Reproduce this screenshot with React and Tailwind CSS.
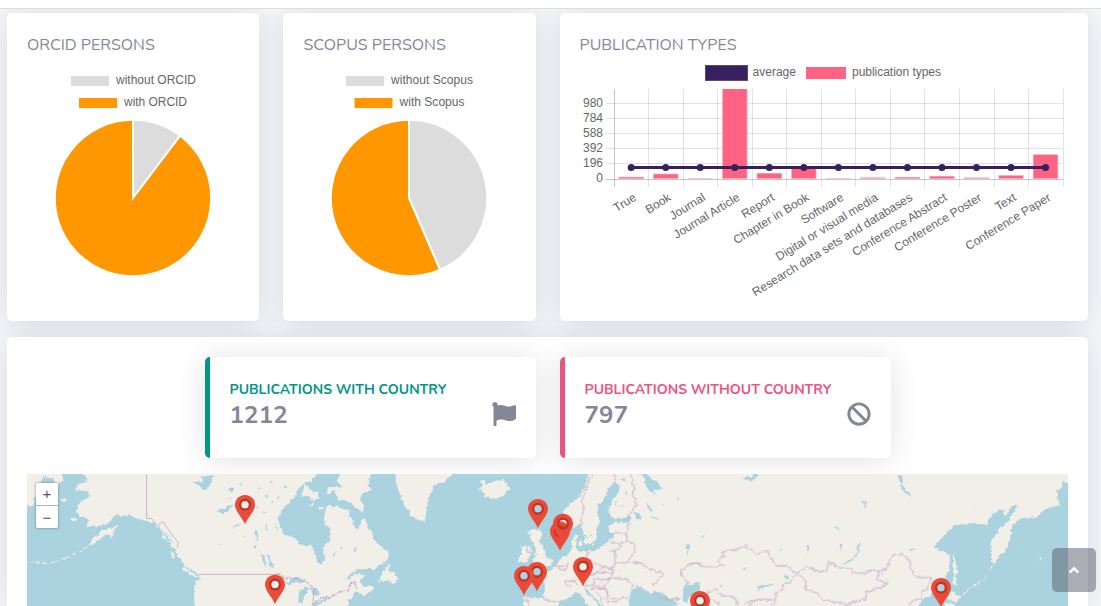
import React from "react";
import { FaFlag, FaBan, FaAngleUp } from "react-icons/fa";

const shadow = "shadow-[0_2px_28px_0_rgba(58,59,69,0.15)]";
const chartFont = "font-['Liberation_Sans',Arial,sans-serif] text-[12px]";

function Title({ children, className }) {
  return (
    <h2 className={`h-[22px] whitespace-nowrap pt-px font-['Nunito','Lato',sans-serif] text-[16px] leading-[22px] font-normal text-[#858796] ${className}`}>
      {children}
    </h2>
  );
}

function PieCard({ title, titleClass, name, share, width, legend }) {
  const angle = share * Math.PI * 2;
  const r = 78.2;
  const x = r * Math.sin(angle);
  const y = -r * Math.cos(angle);
  return (
    <section className={`h-[308px] rounded-[5px] bg-white px-5 pt-5 ${shadow}`}>
      <Title className={titleClass}>{title}</Title>
      <svg className={`mt-[11px] block ${chartFont}`} width={width - 40} height="220" viewBox={`0 66 ${width - 40} 220`}>
        <rect x={legend[0] - 20} y="76" width="38" height="10" fill="#dcdcdc" />
        <rect x={legend[1] - 20} y="98" width="38" height="10" fill="#ff9800" />
        <text x={legend[0] + 25} y="84" fill="#666" textLength={legend[2]}>without {name}</text>
        <text x={legend[1] + 25} y="106" fill="#666" textLength={legend[3]}>with {name}</text>
        <g transform="translate(106 198)" stroke="#fff" strokeWidth="2">
          <path d={`M0 0V${-r}A${r} ${r} 0 0 1 ${x} ${y}Z`} fill="#dcdcdc" />
          <path d={`M0 0L${x} ${y}A${r} ${r} 0 ${share < 0.5 ? 1 : 0} 1 0 ${-r}Z`} fill="#ff9800" />
        </g>
      </svg>
    </section>
  );
}

const types = [
  ["True", 176.8], ["Book", 173.7], ["Journal", 178.3], ["Journal Article", 89],
  ["Report", 173], ["Chapter in Book", 168], ["Software", 178.3],
  ["Digital or visual media", 177.2], ["Research data sets and databases", 177],
  ["Conference Abstract", 176], ["Conference Poster", 177.3], ["Text", 175.2],
  ["Conference Paper", 154.3],
];
const centre = (i) => 631.2 + i * 34.53;

function BarChart() {
  return (
    <svg className={`mt-[5px] block ${chartFont}`} width="488" height="246" viewBox="580 60 488 246">
      <rect x="705.5" y="65.5" width="42" height="15" fill="#36215e" stroke="#5b4a7b" />
      <text x="752.5" y="76" fill="#666" textLength="43.5">average</text>
      <rect x="806" y="67" width="40" height="12" fill="#ff6384" />
      <text x="852" y="76" fill="#666" textLength="89">publication types</text>
      <g stroke="#000" strokeOpacity=".11">
        {[103.5, 118.5, 133.5, 148.5, 163.5].map((y) => <path key={y} d={`M606 ${y}H1063`} />)}
        {types.map((t, i) => <path key={i} d={`M${Math.floor(648.5 + i * 34.55) + 0.5} 89V187`} />)}
        <path d="M606 179.5H1063M614.5 89V187" strokeOpacity=".22" />
      </g>
      {[980, 784, 588, 392, 196, 0].map((v, i) => (
        <text key={v} x="603" y={107 + i * 15.05} fill="#666" textAnchor="end">{v}</text>
      ))}
      {types.map(([name, top], i) => (
        <g key={name}>
          <rect x={centre(i) - 12.7} y={top} width="25.4" height={179 - top} fill="#ffb1c2" />
          {179 - top > 1.9 && <rect x={centre(i) - 11.9} y={name === "Journal Article" ? top : top + 0.6} width="23.8" height={178.2 - top - (name === "Journal Article" ? 0 : 0.6)} fill="#ff6384" />}
          <text transform={`translate(${centre(i) + 6} 199.6) rotate(-31.5)`} fill="#666" textAnchor="end">{name}</text>
        </g>
      ))}
      <path d={`M${centre(0)} 167.4H${centre(12)}`} stroke="#36215e" strokeWidth="3" />
      {types.map((t, i) => <circle key={i} cx={centre(i)} cy="167.4" r="3.5" fill="#36215e" />)}
    </svg>
  );
}

function CountCard({ label, value, accent, labelClass, icon }) {
  return (
    <article className={`flex h-[101px] w-[331px] items-center justify-between rounded-[5px] border-l-[5px] bg-white pr-5 pl-5 font-['Nunito','Lato',sans-serif] font-bold ${shadow} ${accent}`}>
      <div className="-mt-[5px]">
        <div className={`whitespace-nowrap text-[14px] leading-[20px] ${labelClass}`}>{label}</div>
        <div className="text-[24px] leading-[30px] tracking-[0.2px] text-[#858796]">{value}</div>
      </div>
      <div className="mt-[13px] text-[24px] text-[#858796]">{icon}</div>
    </article>
  );
}

function Pin({ x, y }) {
  return (
    <g transform={`translate(${x} ${y})`}>
      <path fillRule="evenodd" fill="#ea4b39" d="M0 19.5C-2 14-10 6-10 .2C-10-5.5-5.5-9.8 0-9.8S10-5.5 10 .2C10 6 2 14 0 19.5ZM0-4A4 4 0 1 0 0 4A4 4 0 1 0 0-4Z" />
      <circle r="4.9" fill="none" stroke="#bd3527" strokeWidth="2.3" />
    </g>
  );
}

const pins = [[245, 504.7], [275, 584.6], [538, 508.8], [560, 531.3], [563, 523.6], [537, 571.7], [524, 575.7], [583, 566.8], [700, 600.7], [941, 587.8]];

function WorldMap() {
  return (
    <svg className="block h-[132px] w-[1041px] bg-[#aad3df]" viewBox="27 474 1041 132">
      <defs>
        <filter id="coast" x="0" y="0" width="100%" height="100%" colorInterpolationFilters="sRGB">
          <feTurbulence type="fractalNoise" baseFrequency="0.22" numOctaves="2" seed="4" />
          <feDisplacementMap in="SourceGraphic" scale="5" xChannelSelector="R" yChannelSelector="G" />
        </filter>
      </defs>
      <g filter="url(#coast)">
        <g transform="translate(20 466) scale(.33333)" fill="#f2efe9">
          <path d="M0 0H110L130 42L112 55L95 40L75 30L60 50L45 95L40 122L0 118Z" />
          <path d="M180 0L205 45L182 50L158 72L205 75L212 92L182 105L168 138L183 152L205 160L203 182L235 180L262 175L275 160L290 145L320 150L330 146L345 157L378 164L405 174L418 184L430 215L450 235L465 248L472 270L490 295L530 320L540 340L525 350L522 380L525 440H980L985 405L1005 380L1020 378L1030 390L1070 364L1030 360L1020 345L1035 330L1015 320L970 345L985 330L1015 310H1065L1075 300L1105 285L1108 262L1090 245L1065 225L1055 200L1042 180L1035 158L1028 160L1015 190L1005 185L995 155L985 135L950 120H920L912 155L918 175L930 195L928 225L908 245L912 265L905 293L890 285L885 262L875 238H840L830 215L795 208L778 180L776 160L785 135L810 105L830 85L840 62L855 50L875 45L890 24V0Z" />
          <path d="M970 10H1060L1042 60L1055 75L1030 75L1020 95L1035 130L1025 135L995 115L965 100L955 105L945 75L918 80L930 62L970 65L950 45Z" />
          <path d="M855 52L872 75L895 80L895 98L875 102L860 88L842 92L852 68ZM868 114L882 110L878 120L868 122ZM897 122L908 122L908 130L899 130Z" />
          <path d="M1105 290L1110 300L1102 315L1125 320L1133 350L1120 352L1110 345L1078 345L1085 325Z" />
          <path d="M1125 10H1305L1280 45L1240 60L1222 110L1215 165L1195 160L1175 150L1150 110L1130 65Z" />
          <path d="M1380 45L1392 42L1398 57L1425 45L1450 42L1468 65L1450 90L1420 100L1392 92L1396 80L1378 70L1388 62Z" />
          <path d="M155 155L172 158L170 166L157 164ZM262 195L280 194L284 207L270 212ZM115 96L142 102L135 108ZM450 255L462 260L467 282L455 275ZM487 300L500 308L536 334L525 334L498 318Z" />
          <path d="M35 288L60 289M70 292L90 290L115 287M125 280L152 270M158 264L185 254M190 248L210 241" stroke="#f2efe9" strokeWidth="3" />
          <path d="M205 232L225 212L252 190L275 187L300 173L280 194L250 211L235 223L213 238Z" />
        </g>
        <g transform="translate(500 466) scale(.33333)" fill="#f2efe9">
          <path d="M278 0L255 60L240 90L205 120L190 140L185 160L200 185L218 185L240 175L250 200L255 235L270 235L290 220L292 190L300 165L292 145L295 115L320 90L325 65L345 50L360 60L355 80L335 105L325 130L330 153L365 158L395 150L390 167L345 170L325 180L330 200L345 210L325 222L300 250L265 255L240 255L228 248L226 230L235 208L222 205L215 218V245L205 265L185 275L165 300L150 312L130 318L132 345L135 370L130 395H70L68 440H170L180 405L200 398L225 382L240 382L250 400L278 440H305L290 410L260 380L250 365L265 372L305 420L315 440H380L390 385L410 360L430 368L450 382L465 374L490 385L530 408V440H640V0H523L495 42L470 45L490 70L460 70L464 88L450 80L435 45L418 20V0Z" />
          <path d="M425 10H530L500 45L462 44Z" />
          <path d="M95 190L120 190L127 205L117 225L130 250L140 275L158 282L153 300L120 303L92 305L105 290L96 280L110 260L105 240L95 225L88 205ZM65 240L95 238L92 280L58 292L56 275L66 260ZM82 196L90 192L86 208ZM232 225L245 222L248 240L235 240ZM274 237L287 226L280 242Z" />
        </g>
        <path d="M695 460H905V620H695Z" fill="#f2efe9" />
        <g transform="translate(890 466) scale(.33333)" fill="#f2efe9">
          <path d="M-10 0H550V58L520 45L515 60L500 80L508 118L485 122L465 130L428 162L425 152L390 158L370 175L360 190L368 200L350 245L330 270L312 298L303 275L302 230L320 200L355 165L382 120L368 120L345 150L338 145L345 130L318 135L295 160L290 180L250 172L190 178L155 215L130 245L165 258L180 270L178 300L172 330L150 345L120 390L95 400L80 440H-10Z" />
          <path d="M190 255L198 290L206 325L196 330L200 356L190 352L188 310ZM180 375L212 392L197 408L175 400ZM165 410L195 415L180 440H160ZM388 238L397 242L390 244ZM445 273L455 278L449 281Z" />
          <path d="M308 300L300 315M292 327L278 342M270 350L248 364M240 368L220 385" stroke="#f2efe9" strokeWidth="3" />
        </g>
      </g>
      <g filter="url(#coast)" fill="#aad3df">
        <g transform="translate(20 466) scale(.33333)">
          <path d="M545 32L580 28L578 45L560 72L545 64L520 48L550 46ZM592 133L612 128L645 112L625 135L610 145ZM615 72L640 67L638 76ZM635 188L650 174L665 176L645 182ZM655 52L670 54L664 60ZM690 106L705 95L700 112ZM730 90L745 86L742 97ZM680 135L694 130L690 140ZM704 190L717 200L710 225ZM738 170L744 190L735 186ZM765 170L775 198L766 186ZM738 258L752 278L764 310L752 302ZM724 262L735 280L742 305L728 285ZM770 318L782 325L775 334ZM795 348L818 342L805 356ZM595 235L606 234L602 240ZM625 97L633 96L630 101ZM770 100L784 88L778 102ZM706 124L712 118L716 128ZM728 140L736 136L738 146ZM752 108L760 104L762 112ZM788 62L796 56L798 66ZM748 48L756 44L758 52ZM712 64L722 60L724 68ZM672 210L680 214L674 220ZM700 242L708 238L708 248Z" />
          <path d="M795 355L825 332L862 340L842 352L815 350ZM835 400L838 375L855 362L865 368L852 395L848 415L836 412ZM865 362L890 370L902 385L880 392ZM872 418L930 391L930 398L884 421ZM995 140L1008 155L1005 170L990 150ZM905 272L920 260L910 290ZM962 248L970 240L967 254ZM935 262L944 258L940 270ZM1000 250L1012 246L1007 257ZM895 186L903 185L900 192ZM1035 344L1060 342L1055 352ZM1000 322L1030 311L1080 308L1063 324L1030 322Z" />
          <path d="M420 190L445 215L455 240L438 218ZM440 195L452 215L463 236L452 224Z" />
        </g>
        <g transform="translate(500 466) scale(.33333)">
          <path d="M400 138L418 142L425 160L408 160ZM437 108L455 130L452 140L440 122ZM375 70L382 80L378 90ZM365 35L375 40L370 48ZM253 203L262 210L258 218ZM269 196L277 210L273 214ZM450 148L475 158L470 163ZM553 358L600 350V390L575 385L560 410L548 395ZM384 160L392 162L390 174ZM485 118L492 114L490 122ZM558 236L570 234L562 265ZM590 230L602 230L595 234ZM345 105L350 112L346 119ZM362 120L371 122L366 127ZM532 100L540 97L538 105Z" />
        </g>
        <g transform="translate(690 466) scale(.33333)">
          <path d="M155 35L185 33L194 20L205 26L190 42L170 44ZM460 290L480 284L500 260L507 230L512 233L508 256L485 287L465 294ZM-20 358L25 352L26 368L0 382L-20 375ZM203 360L250 355L245 360L212 364L205 375ZM510 99L532 111L525 126L520 112ZM422 190L440 180L453 190L430 185ZM445 222L456 240L457 265L450 240ZM350 240L362 237L353 258ZM360 303L370 303L368 312ZM430 291L437 293L432 304ZM35 210L46 205L42 214ZM158 306L167 304L164 311ZM268 250L284 247L270 258ZM573 325L580 320L576 330ZM225 405L240 403L235 409ZM282 325L298 340L285 340ZM84 359L98 355L96 361Z" />
          <path d="M625 24L634 30L637 60L650 75L671 99L650 82L633 67ZM662 250L674 247L667 256ZM847 130L855 126L850 133ZM615 155L640 150L620 154Z" />
        </g>
      </g>
      <g fill="none" stroke="#cbb2c8" strokeWidth="3" strokeLinejoin="round">
        <g transform="translate(20 466) scale(.33333)">
          <path d="M380 0V157L395 158L412 180L428 166L445 190L460 212L475 230L472 245M537 325H770" />
        </g>
      </g>
      <g filter="url(#coast)" fill="none" stroke="#c6abc3" strokeWidth="3" strokeLinejoin="round">
        <path d="M770 325L785 332L805 337L840 338L860 350L884 370L878 415L905 395L935 390L960 376L985 375L992 350L1004 346L1010 372" transform="translate(20 466) scale(.33333)" />
        <g transform="translate(500 466) scale(.33333)">
          <path d="M280 24L262 55L247 95L250 125L243 180M345 22V50M390 22L402 60L398 85L412 112L387 150L382 180L380 225L362 232M325 203L355 200L382 208M327 225L355 232L362 240L345 255H328M380 225L402 232L404 255L392 272L382 290L345 290M263 250V280L282 292L310 302L338 310L345 288V254M395 290L430 292L442 308L485 320L482 336L462 353L460 360M310 302L285 323L265 328M338 308L338 330L320 340L350 335L380 340L400 360L390 380M230 328L262 326M230 340L195 345L200 360L215 362M195 302L165 295M165 300L198 315L205 290M252 360L285 355L278 335M275 370L315 365L322 375L318 405M72 402H85L86 418M130 400L180 410M82 240L78 255L94 258M460 380L490 398L540 400M600 290L578 292L545 310V330L565 350L555 358" />
          <path d="M280 325L310 318L338 322M285 340L330 340L312 363L280 360M315 370L332 398L385 395M320 410L355 405M285 375L307 400V418M205 346L225 347L230 357" />
        </g>
        <g transform="translate(690 466) scale(.33333)">
          <path d="M0 292L18 290L48 303L98 300L85 286L100 270L95 258L130 252L170 238L182 252L200 265L230 252L258 300L288 298L320 322L347 345V372L380 380L398 402L470 415L525 400L528 378L555 370L595 353L560 340L568 315L550 312L520 322L500 322L478 308L445 305L418 288L408 316L370 312L350 303L320 322L298 350L280 352L275 373L260 380L255 405L245 418M565 315L590 310L600 280L610 266H635L652 275L660 290L664 315L685 335L725 335L710 372L695 375L692 395L670 405L655 418M50 378L75 370L100 390L135 393L143 420M163 415L205 400L250 401M60 400L85 408L82 420M175 420L205 400" />
        </g>
      </g>
      {pins.map(([x, y]) => <Pin key={`${x}-${y}`} x={x} y={y} />)}
    </svg>
  );
}

export default function App() {
  return (
    <div className="relative flex h-[606px] w-[1101px] flex-col overflow-hidden bg-[#f6f7fb]">
      <div className="h-[9px] shrink-0 border-b border-[#dedee2] bg-white" />
      <main className="flex flex-col gap-4 overflow-hidden pt-1 pl-[7px]">
        <div className="grid grid-cols-[252px_253px_528px] gap-6">
          <PieCard title="ORCID PERSONS" titleClass="tracking-[0px]" name="ORCID" share={0.103} width={252} legend={[64, 72, 80, 63]} />
          <PieCard title="SCOPUS PERSONS" titleClass="pl-[0.5px]" name="Scopus" share={0.435} width={253} legend={[63, 71.5, 82, 65]} />
          <section className={`h-[308px] rounded-[5px] bg-white px-5 pt-5 ${shadow}`}>
            <Title className="-ml-[0.5px]">PUBLICATION TYPES</Title>
            <BarChart />
          </section>
        </div>
        <section className={`h-[320px] w-[1081px] rounded-t-[5px] bg-white px-5 pt-5 ${shadow}`}>
          <div className="mb-4 flex justify-center gap-6">
            <CountCard label="PUBLICATIONS WITH COUNTRY" value="1212" accent="border-[#009688]" labelClass="text-[#009688]" icon={<FaFlag />} />
            <CountCard label="PUBLICATIONS WITHOUT COUNTRY" value="797" accent="border-[#ec547f]" labelClass="text-[#ec547f]" icon={<FaBan />} />
          </div>
          <div className="relative">
            <WorldMap />
            <div className="absolute top-[9px] left-[9px] flex w-[22px] flex-col overflow-hidden rounded-[2px] text-[#555] shadow-[0_0_2px_1px_rgba(0,0,0,0.2)]">
              <button className="flex h-[23px] items-center justify-center border-b border-[#a9b8bc] bg-white pb-px font-['Liberation_Sans',sans-serif] text-[15px] leading-none">+</button>
              <button className="flex h-[22px] items-center justify-center bg-white font-['Liberation_Sans',sans-serif] text-[15px] leading-none">−</button>
            </div>
          </div>
        </section>
      </main>
      <button className="absolute top-[548px] left-[1052px] flex h-[44px] w-[44px] items-center justify-center rounded-[5px] bg-[#5a5c69]/50 text-[16px] text-white">
        <FaAngleUp />
      </button>
    </div>
  );
}
